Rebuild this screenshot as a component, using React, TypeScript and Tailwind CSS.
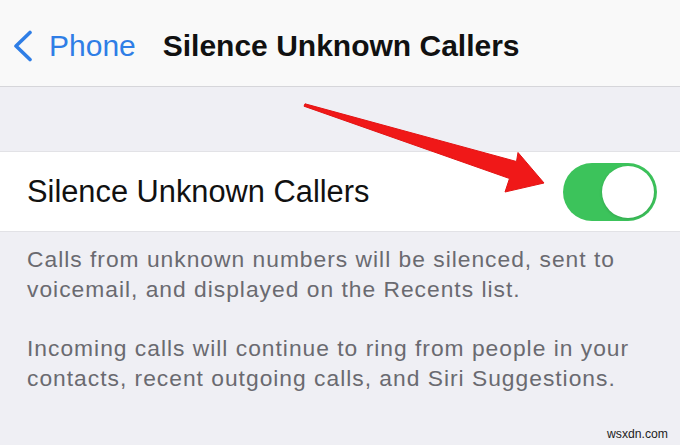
function Chevron() {
  return (
    <svg width="22" height="32" viewBox="0 0 22 32" fill="none">
      <path d="M18 2.5 L4 16 L18 29.5" stroke="#2f7ee6" strokeWidth="3.6" strokeLinecap="round" strokeLinejoin="round" />
    </svg>
  );
}

function Toggle({ on }: { on: boolean }) {
  return (
    <div className={on ? "flex h-[58px] w-[94px] justify-end rounded-full bg-[#3cc35b] p-[3px]" : "flex h-[58px] w-[94px] rounded-full bg-[#e5e5ea] p-[3px]"}>
      <div className="h-[52px] w-[52px] rounded-full bg-white shadow-[0_1px_3px_rgba(0,0,0,0.15)]" />
    </div>
  );
}

// red annotation arrow pointing at the switch
function Arrow() {
  return (
    <svg className="pointer-events-none absolute left-0 top-0" width="680" height="445" viewBox="0 0 680 445">
      <polygon
        points="305,103.8 516.5,161.5 518,152.5 544,183 505,192 509.5,178.5 304,106.2"
        fill="#f01818"
        stroke="#e21414"
        strokeWidth="1"
        strokeLinejoin="round"
      />
    </svg>
  );
}

export default function App() {
  return (
    <div className="relative h-[445px] w-[680px] overflow-hidden bg-[#efeff4] font-['Liberation_Sans',Arial,sans-serif]">
      <header className="flex h-[87px] items-center border-b border-[#d6d6da] bg-[#f9f9f9] pl-[12px] pt-[5px]">
        <Chevron />
        <span className="ml-[15px] text-[30px] leading-[34px] text-[#2f7ee6]">Phone</span>
        <h1 className="ml-[27px] text-[30px] font-bold leading-[34px] text-[#111]">Silence Unknown Callers</h1>
      </header>

      <div className="h-[64px]" />

      <div className="flex h-[81px] items-center justify-between border-y border-[#e2e2e6] bg-white pl-[27px] pr-[23px]">
        <span className="text-[30.8px] leading-[36px] text-[#111]">Silence Unknown Callers</span>
        <Toggle on />
      </div>

      <div className="space-y-[30px] px-[27px] pt-[13px] text-[22.8px] leading-[29.5px] tracking-[1px] text-[#6a6a70]">
        <p>
          Calls from unknown numbers will be silenced, sent to
          <br />
          voicemail, and displayed on the Recents list.
        </p>
        <p>
          Incoming calls will continue to ring from people in your
          <br />
          contacts, recent outgoing calls, and Siri Suggestions.
        </p>
      </div>

      <Arrow />

      <span className="absolute bottom-[4px] right-[12px] text-[12.2px] leading-[14px] text-[#222]">wsxdn.com</span>
    </div>
  );
}
